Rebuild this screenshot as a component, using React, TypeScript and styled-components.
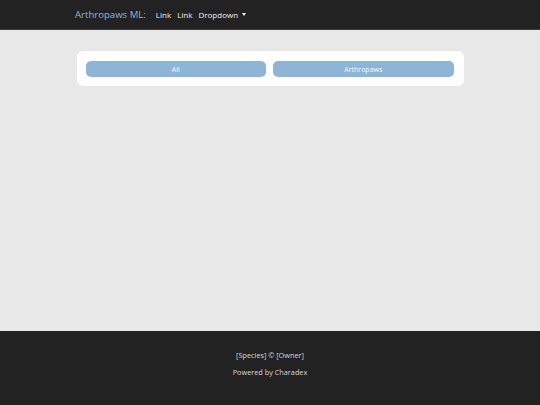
import React from "react";
import styled, { createGlobalStyle } from "styled-components";

const Global = createGlobalStyle`
  html, body { margin: 0; padding: 0; height: 100%; }
  body { background: #e8e8e8; font-family: "Open Sans", "Noto Sans", sans-serif; }
  #root { min-height: 100%; }
`;

const Page = styled.div`
  display: flex;
  flex-direction: column;
  min-height: 405px;
`;

const Navbar = styled.nav`
  height: 30px;
  background: #222222;
  border-bottom: 1px solid #3a3a3a;
  box-sizing: border-box;
  display: flex;
  align-items: center;
  justify-content: center;
`;

const NavInner = styled.div`
  width: 388px;
  display: flex;
  align-items: center;
  gap: 6px;
`;

const Brand = styled.span`
  color: #8fb5d6;
  font-size: 9.6px;
  margin-right: 4px;
  margin-left: -1px;
`;

const NavLink = styled.span`
  color: #f0f0f0;
  font-size: 8px;
  display: flex;
  align-items: center;
  gap: 4px;
`;

const Caret = styled.span`
  width: 0;
  height: 0;
  border-left: 2.5px solid transparent;
  border-right: 2.5px solid transparent;
  border-top: 3px solid #f0f0f0;
`;

const Main = styled.main`
  flex: 1;
  display: flex;
  justify-content: center;
  padding-top: 21px;
`;

const Card = styled.div`
  width: 387px;
  height: 35px;
  box-sizing: border-box;
  background: #ffffff;
  border-radius: 6px;
  padding: 10px 10px 10px 9px;
  display: grid;
  grid-template-columns: 1fr 1fr;
  gap: 7px;
`;

const FilterButton = styled.button`
  height: 16px;
  border: none;
  border-radius: 5px;
  background: #8fb5d6;
  color: #f4f8fb;
  font-family: "Open Sans", "Noto Sans", sans-serif;
  font-size: 7px;
  padding: 0;
`;

const Footer = styled.footer`
  height: 74px;
  background: #222222;
  display: flex;
  flex-direction: column;
  align-items: center;
  padding-top: 19px;
  box-sizing: border-box;
  gap: 7px;
`;

const FooterLine = styled.div`
  color: #d8d8d8;
  font-size: 7.3px;
`;

export default function App() {
  return (
    <>
      <Global />
      <Page>
        <Navbar>
          <NavInner>
            <Brand>Arthropaws ML:</Brand>
            <NavLink>Link</NavLink>
            <NavLink>Link</NavLink>
            <NavLink>
              Dropdown <Caret />
            </NavLink>
          </NavInner>
        </Navbar>
        <Main>
          <Card>
            <FilterButton>All</FilterButton>
            <FilterButton>Arthropaws</FilterButton>
          </Card>
        </Main>
        <Footer>
          <FooterLine>[Species] © [Owner]</FooterLine>
          <FooterLine>Powered by Charadex</FooterLine>
        </Footer>
      </Page>
    </>
  );
}
